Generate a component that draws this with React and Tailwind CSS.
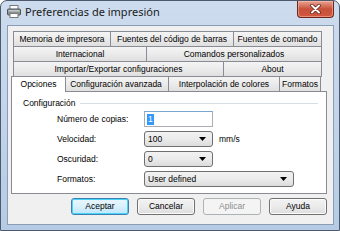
import React from "react";

function Tab({ className, children }) {
  return (
    <div
      className={
        "flex h-[16px] shrink-0 items-center justify-center border border-[#898c95] bg-gradient-to-b from-[#f4f4f4] via-[#ebebeb] to-[#dfdfdf] text-[8.5px] leading-none text-black whitespace-nowrap " +
        className
      }
    >
      {children}
    </div>
  );
}

function Arrow() {
  return (
    <svg width="7" height="4" viewBox="0 0 7 4" className="shrink-0">
      <path d="M0 0 H7 L3.5 4 Z" fill="#000" />
    </svg>
  );
}

function Select({ className, value }) {
  return (
    <div
      className={
        "flex h-[16px] items-center justify-between rounded-[3px] border border-[#707070] bg-gradient-to-b from-[#f2f2f2] via-[#ebebeb] to-[#dcdcdc] pl-[3px] pr-[6px] text-[8.5px] leading-none text-black " +
        className
      }
    >
      <span>{value}</span>
      <Arrow />
    </div>
  );
}

function Button({ children, focus, disabled }) {
  let cls =
    "flex h-[17px] w-[58px] items-center justify-center rounded-[3px] border text-[8.5px] leading-none ";
  if (disabled) {
    cls += "border-[#adb2b5] bg-[#f4f4f4] text-[#8d8d8d]";
  } else if (focus) {
    cls +=
      "border-[#3c7fb1] bg-gradient-to-b from-[#eaf6fd] via-[#d9f0fc] to-[#bee6fd] text-black shadow-[inset_0_0_0_1px_#48d4f7]";
  } else {
    cls +=
      "border-[#707070] bg-gradient-to-b from-[#f2f2f2] via-[#ebebeb] to-[#dddddd] text-black shadow-[inset_0_0_0_1px_#fcfcfc]";
  }
  return <div className={cls}>{children}</div>;
}

function Row({ label, children }) {
  return (
    <div className="flex h-[16px] items-center">
      <div className="w-[132px] shrink-0 pl-[45px] text-[8.5px] leading-none text-black whitespace-nowrap">
        {label}
      </div>
      <div className="flex items-center">{children}</div>
    </div>
  );
}

function PrinterIcon() {
  return (
    <svg width="14" height="13" viewBox="0 0 14 13">
      <rect x="3" y="0.5" width="8" height="4" fill="#fff" stroke="#7a7a7a" />
      <rect x="0.5" y="4" width="13" height="6" rx="1" fill="#8d9299" stroke="#4f5459" />
      <rect x="1.5" y="5" width="11" height="1.5" fill="#c4c8cc" />
      <rect x="3" y="8.5" width="8" height="4" fill="#fff" stroke="#7a7a7a" />
      <rect x="11" y="6" width="1.5" height="1" fill="#7ed957" />
    </svg>
  );
}

export default function App() {
  return (
    <div className="flex h-[231px] w-[340px] flex-col overflow-hidden rounded-t-[7px] border border-[#4e5a6b] bg-gradient-to-b from-[#cddcee] via-[#c1d4ea] to-[#b5cbe5] font-['Liberation_Sans',Arial,sans-serif]">
      {/* title bar */}
      <div className="flex h-[24px] shrink-0 items-start">
        <div className="ml-[6px] mt-[4px]">
          <PrinterIcon />
        </div>
        <div className="ml-[4px] mt-[5px] text-[11px] leading-none text-[#1b1b1b] font-['Noto_Sans',sans-serif] whitespace-nowrap">
          Preferencias de impresión
        </div>
        <div className="ml-auto mr-[5px] flex h-[17px] w-[37px] items-center justify-center rounded-b-[4px] border border-t-0 border-[#6e261a] bg-gradient-to-b from-[#e7a493] via-[#c8513b] to-[#d2573e] shadow-[inset_0_0_0_1px_rgba(255,200,190,0.5)]">
          <svg width="11" height="10" viewBox="0 0 11 10">
            <path d="M2 1.5 L9 8.5 M9 1.5 L2 8.5" stroke="#5a1a10" strokeWidth="3.4" strokeLinecap="round" />
            <path d="M2 1.5 L9 8.5 M9 1.5 L2 8.5" stroke="#ffffff" strokeWidth="2" strokeLinecap="round" />
          </svg>
        </div>
      </div>

      {/* client area */}
      <div className="ml-[6px] mr-[5px] mb-[5px] flex flex-1 flex-col border border-[#8a9db5] bg-[#f0f0f0]">
        <div className="ml-[3px] mr-[6px] mt-[5px] flex flex-col">
          {/* tab rows */}
          <div className="ml-[2px] flex flex-col">
            <div className="flex">
              <Tab className="w-[98px]">Memoria de impresora</Tab>
              <Tab className="-ml-px w-[124px]">Fuentes del código de barras</Tab>
              <Tab className="-ml-px w-[89px]">Fuentes de comando</Tab>
            </div>
            <div className="-mt-px flex">
              <Tab className="w-[134px]">Internacional</Tab>
              <Tab className="-ml-px w-[176px]">Comandos personalizados</Tab>
            </div>
            <div className="-mt-px flex">
              <Tab className="w-[211px]">Importar/Exportar configuraciones</Tab>
              <Tab className="-ml-px w-[99px]">About</Tab>
            </div>
            <div className="-mt-px flex h-[16px] items-end">
              <div className="relative z-10 -ml-[2px] flex h-[16px] w-[55px] shrink-0 items-center justify-center border border-b-0 border-[#898c95] bg-white pb-[1px] text-[8.5px] leading-none text-black">
                Opciones
              </div>
              <Tab className="-ml-[3px] h-[14px] w-[106px]">Configuración avanzada</Tab>
              <Tab className="-ml-px h-[14px] w-[112px]">Interpolación de colores</Tab>
              <Tab className="-ml-px h-[14px] w-[42px]">Formatos</Tab>
            </div>
          </div>

          {/* panel */}
          <div className="-mt-px flex flex-col border border-[#898c95] bg-white pb-[6px] pt-[5px]">
            <div className="flex h-[12px] items-center">
              <span className="ml-[11px] text-[8.5px] leading-none text-black">Configuración</span>
              <div className="ml-[5px] mr-[8px] h-px flex-1 bg-[#d5dfe5]" />
            </div>
            <div className="mt-[2px] flex flex-col gap-[4px]">
              <Row label="Número de copias:">
                <div className="flex h-[16px] w-[69px] items-center border border-[#abadb3] border-t-[#7aa7d0] bg-white pl-[2px]">
                  <span className="bg-[#3399ff] px-px text-[8.5px] leading-[11px] text-white">1</span>
                </div>
              </Row>
              <Row label="Velocidad:">
                <Select className="w-[69px]" value="100" />
                <span className="ml-[6px] text-[8.5px] leading-none text-black">mm/s</span>
              </Row>
              <Row label="Oscuridad:">
                <Select className="w-[69px]" value="0" />
              </Row>
              <Row label="Formatos:">
                <Select className="w-[150px]" value="User defined" />
              </Row>
            </div>
          </div>

          {/* buttons */}
          <div className="mt-[4px] flex justify-end gap-[8px]">
            <Button focus>Aceptar</Button>
            <Button>Cancelar</Button>
            <Button disabled>Aplicar</Button>
            <Button>Ayuda</Button>
          </div>
        </div>
      </div>
    </div>
  );
}
